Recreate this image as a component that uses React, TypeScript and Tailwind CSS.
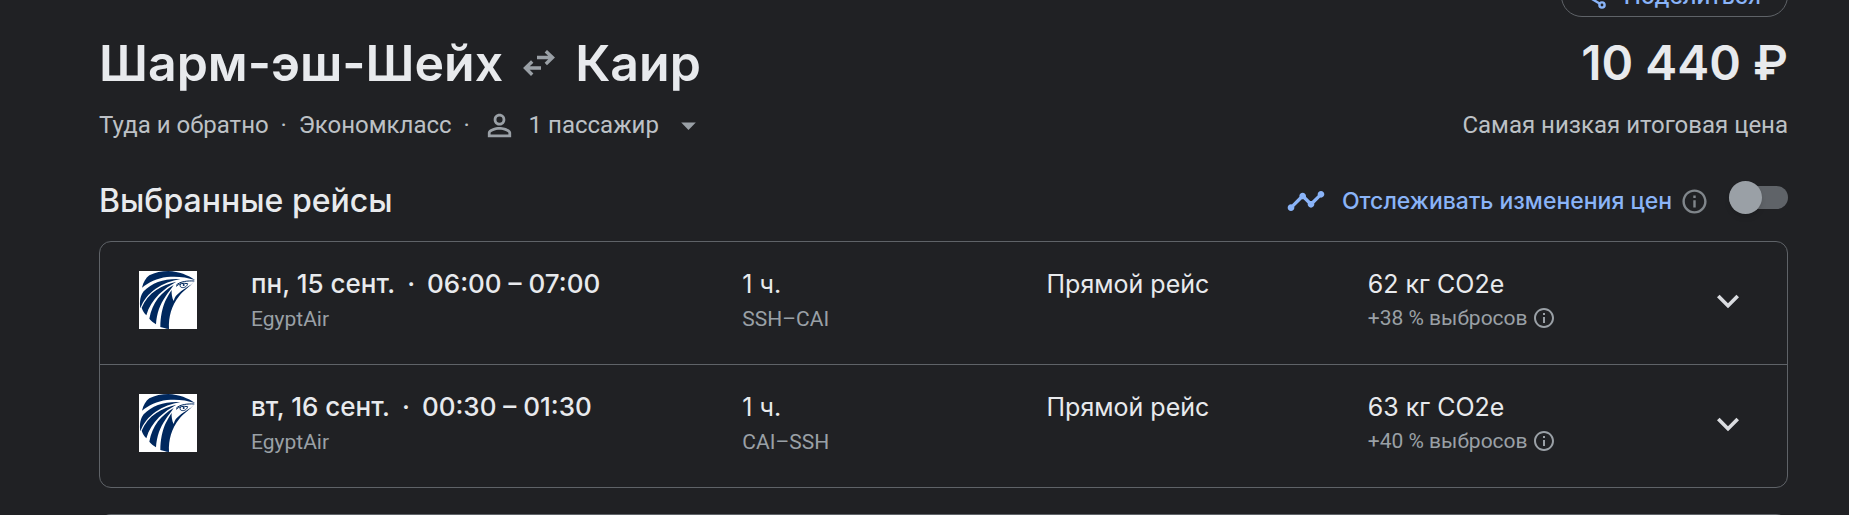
import { MdArrowDropDown, MdExpandMore, MdInfoOutline, MdPersonOutline, MdTimeline } from 'react-icons/md';

type Flight = {
  date: string;
  time: string;
  airline: string;
  duration: string;
  route: string;
  stops: string;
  co2: string;
  delta: string;
};

const flights: Flight[] = [
  {
    date: 'пн, 15 сент.',
    time: '06:00 – 07:00',
    airline: 'EgyptAir',
    duration: '1 ч.',
    route: 'SSH–CAI',
    stops: 'Прямой рейс',
    co2: '62 кг CO2e',
    delta: '+38 % выбросов',
  },
  {
    date: 'вт, 16 сент.',
    time: '00:30 – 01:30',
    airline: 'EgyptAir',
    duration: '1 ч.',
    route: 'CAI–SSH',
    stops: 'Прямой рейс',
    co2: '63 кг CO2e',
    delta: '+40 % выбросов',
  },
];

function FalconLogo() {
  return (
    <svg viewBox="0 0 174 174" className="size-[58px] bg-white" aria-hidden="true">
      <g fill="#00285e">
        <path d="M9 50C13 34 20 21 31 13C48 4 68 0 88 0C120 2 148 12 168 27C142 18 112 15 84 18C54 22 29 34 9 50Z" />
        <path d="M4 112C1 92 4 74 14 61C40 34 76 22 124 24C98 29 72 38 50 53C28 69 13 87 4 112Z" />
        <path d="M22 133C16 127 11 120 8 110C17 88 32 70 52 57C70 45 90 37 112 32C94 42 76 54 60 70C42 88 29 108 22 133Z" />
        <path d="M51 160C43 155 36 149 31 143C35 120 44 99 57 82C70 66 86 52 104 42C96 54 88 64 79 77C63 100 53 126 51 160Z" />
        <path d="M90 174C80 173 71 170 64 168C64 138 70 109 80 88C86 76 92 66 98 57C97 68 99 80 104 90C107 78 113 71 120 66C136 51 154 46 167 30C153 48 134 57 120 76C98 104 88 138 90 174Z" />
      </g>
      <g fill="none" stroke="#00285e" strokeWidth="3">
        <path d="M112 42C124 31 146 29 166 30" />
        <path d="M111 46C120 38 132 35 146 38C144 46 136 52 127 49C122 47 122 42 126 39" />
      </g>
      <circle cx="134" cy="42" r="3" fill="#00285e" />
    </svg>
  );
}

function ShareIcon() {
  return (
    <svg viewBox="0 0 26 26" className="size-[26px]" fill="none" stroke="currentColor" strokeWidth="2.4" aria-hidden="true">
      <circle cx="20" cy="5" r="2.600" />
      <circle cx="5" cy="13" r="2.600" />
      <circle cx="20" cy="22" r="2.600" />
      <path d="M7.500 11.500L17.500 6.500M7.500 14.500L17.500 20.500" />
    </svg>
  );
}

function RoundTripIcon() {
  return (
    <svg viewBox="0 0 32 26" className="h-[26px] w-8 text-[#9aa0a6]" fill="none" stroke="currentColor" strokeWidth="3.4" aria-label="туда и обратно">
      <path d="M14 7.500H30M22.800 1.200L29.500 7.500L22.800 14M18 18H2.500M9.200 11.500L2.500 18L9.200 24.700" />
    </svg>
  );
}

function FlightRow({ flight }: { flight: Flight }) {
  return (
    <li className="grid h-[123px] grid-cols-[112px_491fr_304fr_321fr_338fr_44px] items-start border-b border-[#5f6368] pr-[37px] pl-[39px] last:h-[122px] last:border-b-0">
      <div className="pt-[29px]">
        <FalconLogo />
      </div>
      <div className="pt-6">
        <div className="flex gap-3 font-[Inter,sans-serif] text-[26px] leading-9 font-medium">
          <span>{flight.date}</span>
          <span>·</span>
          <span>{flight.time}</span>
        </div>
        <div className="text-[21px] leading-[34px] text-[#9aa0a6]">{flight.airline}</div>
      </div>
      <div className="pt-6">
        <div className="font-[Inter,sans-serif] text-[25px] leading-9">{flight.duration}</div>
        <div className="text-[21px] leading-[34px] text-[#9aa0a6]">{flight.route}</div>
      </div>
      <div className="pt-6 font-[Inter,sans-serif] text-[25px] leading-9">{flight.stops}</div>
      <div className="pt-6">
        <div className="font-[Inter,sans-serif] text-[25px] leading-9">{flight.co2}</div>
        <div className="flex items-center gap-1 text-[21px] leading-8 text-[#9aa0a6]">
          <span>{flight.delta}</span>
          <MdInfoOutline className="size-6" aria-hidden="true" />
        </div>
      </div>
      <button type="button" aria-label="Подробнее о рейсе" className="mt-[37px] text-[#dadce0]">
        <MdExpandMore className="size-11" />
      </button>
    </li>
  );
}

export default function App() {
  return (
    <main className="h-screen overflow-hidden bg-[#202124] pr-[61px] pl-[99px] font-[Roboto,sans-serif] text-[#e8eaed]">
      <div className="-mt-[25px] flex justify-end">
        <button
          type="button"
          className="flex h-[42px] items-center gap-4 rounded-full border border-[#5f6368] pr-[26px] pl-5 font-[Inter,sans-serif] text-[23px] font-medium text-[#8ab4f8]"
        >
          <ShareIcon />
          Поделиться
        </button>
      </div>

      <header className="mt-4 flex justify-between">
        <div>
          <h1 className="flex items-center gap-5 font-[Inter,sans-serif] text-[50px] leading-[60px] font-semibold">
            <span>Шарм-эш-Шейх</span>
            <RoundTripIcon />
            <span>Каир</span>
          </h1>
          <div className="mt-4 flex h-8 items-center text-2xl leading-8 text-[#bdc1c6]">
            <span>Туда и обратно</span>
            <span className="w-[30px] text-center">·</span>
            <span>Экономкласс</span>
            <span className="w-[30px] text-center">·</span>
            <button type="button" className="flex items-center gap-3">
              <MdPersonOutline className="size-[35px] text-[#9aa0a6]" aria-hidden="true" />
              <span>1 пассажир</span>
              <MdArrowDropDown className="size-[35px] text-[#9aa0a6]" aria-hidden="true" />
            </button>
          </div>
        </div>
        <div className="text-right">
          <div className="font-[Inter,sans-serif] text-[48px] leading-[60px] font-semibold">10 440 ₽</div>
          <div className="mt-4 text-2xl leading-8 text-[#bdc1c6]">Самая низкая итоговая цена</div>
        </div>
      </header>

      <section className="mt-10">
        <div className="flex h-10 items-center justify-between">
          <h2 className="font-[Inter,sans-serif] text-[32px] leading-10 font-medium">Выбранные рейсы</h2>
          <div className="flex items-center text-[#8ab4f8]">
            <MdTimeline className="mr-4 size-10" aria-hidden="true" />
            <label htmlFor="track" className="font-[Inter,sans-serif] text-[23px] leading-10 font-medium">
              Отслеживать изменения цен
            </label>
            <MdInfoOutline className="ml-2 size-[29px] text-[#80868b]" aria-hidden="true" />
            <input
              id="track"
              type="checkbox"
              role="switch"
              className="mb-2 ml-5 flex h-[23px] w-[59px] appearance-none items-center rounded-full bg-[#5f6368] before:size-[33px] before:shrink-0 before:rounded-full before:bg-[#9aa0a6] before:shadow-md before:content-['']"
            />
          </div>
        </div>
        <ul className="mt-5 rounded-xl border border-[#5f6368]">
          {flights.map((flight) => (
            <FlightRow key={flight.route} flight={flight} />
          ))}
        </ul>
      </section>

      <section className="mt-[26px] h-6 rounded-t-xl border border-b-0 border-[#5f6368]" />
    </main>
  );
}
